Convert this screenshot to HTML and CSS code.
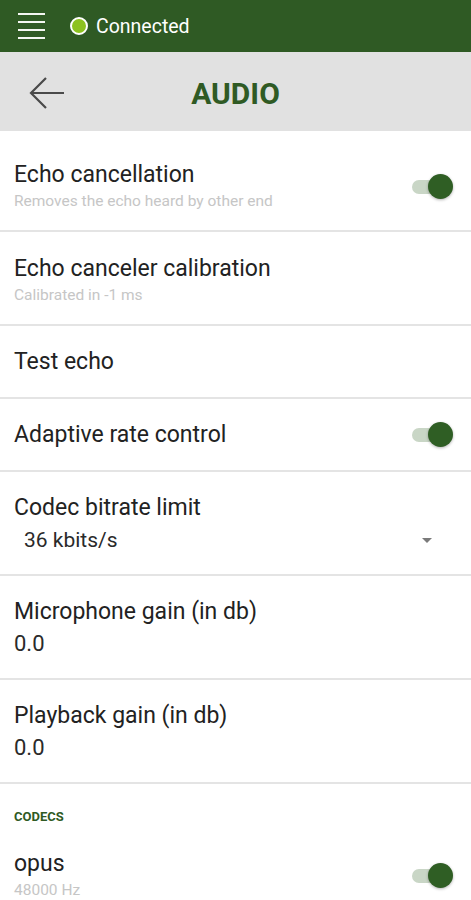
FILE: index.html
```html
<!DOCTYPE html>
<html>
<head>
<meta charset="utf-8">
<link rel="stylesheet" href="styles.css">
</head>
<body>
<div class="topbar">
  <div class="menu"><span></span><span></span><span></span><span></span></div>
  <div class="status"><span class="dot"></span><span class="status-text">Connected</span></div>
</div>
<div class="header">
  <svg class="back" width="36" height="34" viewBox="0 0 36 34"><path d="M2 17 H35 M17 2 L2 17 L17 32" fill="none" stroke="#4a4a4a" stroke-width="2.2"/></svg>
  <div class="title">AUDIO</div>
</div>
<div class="list">
  <div class="row first">
    <div class="texts">
      <div class="label">Echo cancellation</div>
      <div class="sub">Removes the echo heard by other end</div>
    </div>
    <div class="toggle"><span class="knob"></span></div>
  </div>
  <div class="row">
    <div class="texts">
      <div class="label">Echo canceler calibration</div>
      <div class="sub">Calibrated in -1 ms</div>
    </div>
  </div>
  <div class="row single">
    <div class="texts"><div class="label">Test echo</div></div>
  </div>
  <div class="row single">
    <div class="texts"><div class="label">Adaptive rate control</div></div>
    <div class="toggle"><span class="knob"></span></div>
  </div>
  <div class="row value-row">
    <div class="texts">
      <div class="label">Codec bitrate limit</div>
      <div class="spinner"><span class="value">36 kbits/s</span><span class="caret"></span></div>
    </div>
  </div>
  <div class="row value-row">
    <div class="texts">
      <div class="label">Microphone gain (in db)</div>
      <div class="value">0.0</div>
    </div>
  </div>
  <div class="row value-row">
    <div class="texts">
      <div class="label">Playback gain (in db)</div>
      <div class="value">0.0</div>
    </div>
  </div>
  <div class="section">CODECS</div>
  <div class="row codec">
    <div class="texts">
      <div class="label">opus</div>
      <div class="sub">48000 Hz</div>
    </div>
    <div class="toggle"><span class="knob"></span></div>
  </div>
</div>
</body>
</html>
```
FILE: styles.css
```css
html, body {
  margin: 0;
  padding: 0;
  background: #ffffff;
  font-family: Roboto, "Noto Sans", sans-serif;
  width: 471px;
  height: 900px;
  overflow: hidden;
}
.topbar {
  height: 52px;
  background: #2f5a24;
  display: flex;
  align-items: center;
  padding-left: 18px;
  box-sizing: border-box;
}
.menu {
  width: 27px;
  display: flex;
  flex-direction: column;
  gap: 5.5px;
}
.menu span {
  display: block;
  height: 2.5px;
  background: #f4f7f2;
}
.status {
  display: flex;
  align-items: center;
  margin-left: 25px;
}
.dot {
  width: 14px;
  height: 14px;
  border-radius: 50%;
  background: #8cc21f;
  border: 2.5px solid #ffffff;
}
.status-text {
  color: #ffffff;
  font-size: 19.5px;
  margin-left: 8px;
}
.header {
  height: 79px;
  background: #e1e1e1;
  display: flex;
  align-items: center;
  padding-left: 29px;
}
.back {
  display: block;
  margin-top: 2px;
}
.title {
  flex: 1;
  text-align: center;
  font-size: 30px;
  font-weight: bold;
  color: #2f5a24;
  margin-right: 65px;
  margin-top: 4px;
}
.list {
  display: flex;
  flex-direction: column;
}
.row {
  display: flex;
  align-items: center;
  padding: 24px 24px 19px 14px;
  border-bottom: 2px solid #e4e4e4;
}
.row.first {
  padding-top: 31px;
}
.row.single {
  padding-top: 23px;
  padding-bottom: 22px;
}
.row.value-row {
  padding-top: 23px;
  padding-bottom: 21px;
}
.texts {
  flex: 1;
}
.label {
  font-size: 23px;
  line-height: 26px;
  color: #222222;
}
.sub {
  font-size: 15.5px;
  line-height: 20px;
  margin-top: 3px;
  color: #c6c6c6;
}
.value {
  font-size: 22px;
  line-height: 26px;
  color: #2a2a2a;
}
.value-row .value {
  margin-top: 6px;
}
.spinner {
  display: flex;
  align-items: center;
  margin-top: 6px;
  padding-left: 10px;
  padding-right: 15px;
}
.spinner .value {
  margin-top: 0;
  flex: 1;
  font-size: 21px;
}
.caret {
  width: 0;
  height: 0;
  border-left: 5px solid transparent;
  border-right: 5px solid transparent;
  border-top: 5px solid #7a7a7a;
}
.toggle {
  position: relative;
  width: 35px;
  height: 14px;
  border-radius: 7px;
  background: #c9d6c6;
}
.knob {
  position: absolute;
  right: -6px;
  top: -6px;
  width: 25px;
  height: 25px;
  border-radius: 50%;
  background: #2f5e24;
  box-shadow: 0 1px 3px rgba(0,0,0,0.3);
}
.section {
  font-size: 13px;
  font-weight: bold;
  color: #2f5a24;
  padding: 25px 14px 0 14px;
  line-height: 16px;
}
.row.codec {
  border-bottom: none;
  padding-top: 26px;
}
```
